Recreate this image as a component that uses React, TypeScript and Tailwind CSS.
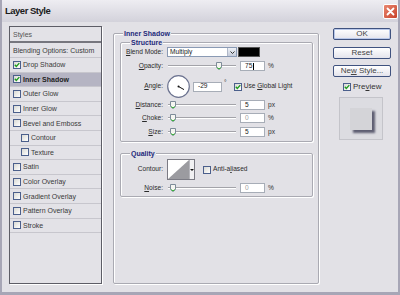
import React from 'react';

type StyleItem = {
    label: string;
    checked?: boolean;
    indent?: boolean;
    active?: boolean;
};

const ITEMS: StyleItem[] = [
    { label: 'Drop Shadow', checked: true },
    { label: 'Inner Shadow', checked: true, active: true },
    { label: 'Outer Glow' },
    { label: 'Inner Glow' },
    { label: 'Bevel and Emboss' },
    { label: 'Contour', indent: true },
    { label: 'Texture', indent: true },
    { label: 'Satin' },
    { label: 'Color Overlay' },
    { label: 'Gradient Overlay' },
    { label: 'Pattern Overlay' },
    { label: 'Stroke' },
];

// underlined mnemonic letter
const U = ({ children }: { children: React.ReactNode }) => (
    <span className="underline decoration-[0.5px] underline-offset-[1px]">{children}</span>
);

const CheckBox = ({ checked }: { checked?: boolean }) => (
    <span className="flex h-[8px] w-[8px] shrink-0 items-center justify-center border border-[#4b5f8c] bg-gradient-to-br from-[#d9d9d4] to-white">
        {checked && (
            <svg viewBox="0 0 6 6" className="h-[6px] w-[6px]">
                <path d="M0.8 2.8 L2.3 4.4 L5.3 1.1" fill="none" stroke="#1e9b1e" strokeWidth="1.4" />
            </svg>
        )}
    </span>
);

const Slider = ({ at }: { at: number }) => (
    <div className="relative ml-[1px] h-[10px] w-[68px]">
        <div className="absolute inset-x-0 top-[4px] h-[2px] border-t border-[#a3a3a9] bg-white" />
        <svg className="absolute top-[1px] h-[8px] w-[6px]" style={{ left: at }} viewBox="0 0 6 8">
            <path d="M0.5 0.5 H5.5 V5.5 L3 7.5 L0.5 5.5 Z" fill="#f5f5f1" stroke="#7d8b99" strokeWidth="1" />
            <path d="M1.2 5.6 L3 7 L4.8 5.6" fill="none" stroke="#2eb02e" strokeWidth="1" />
        </svg>
    </div>
);

const Field = ({
    children,
    dim,
    className = 'ml-[4px] w-[25px]',
}: {
    children: React.ReactNode;
    dim?: boolean;
    className?: string;
}) => (
    <div
        className={`flex h-[10px] items-center border border-[#a7adb7] bg-white pl-[4px] text-[6.6px] leading-none ${className} ${
            dim ? 'text-[#a0a0a0]' : 'text-[#222]'
        }`}
    >
        {children}
    </div>
);

const Group = ({
    title,
    className,
    children,
}: {
    title: string;
    className: string;
    children?: React.ReactNode;
}) => (
    <div
        className={`relative rounded-[2px] border border-[#aaaab2] shadow-[1px_1px_0_#fff,inset_1px_1px_0_#fff] ${className}`}
    >
        <span className="absolute top-[-5px] left-[9px] bg-[#e2e1e6] px-[1px] text-[7px] leading-[9px] font-bold text-[#1d2a7a]">
            {title}
        </span>
        {children}
    </div>
);

const Row = ({
    label,
    className,
    children,
}: {
    label: React.ReactNode;
    className: string;
    children: React.ReactNode;
}) => (
    <div className={`flex items-center ${className}`}>
        <span className="w-[42px] text-right text-[6.6px] leading-none text-[#2a2a2a]">{label}</span>
        <div className="ml-[4px] flex items-center">{children}</div>
    </div>
);

const Unit = ({ children }: { children: React.ReactNode }) => (
    <span className="ml-[3px] text-[6.6px] leading-none text-[#333]">{children}</span>
);

const Button = ({ children, main }: { children: React.ReactNode; main?: boolean }) => (
    <div
        className={`flex h-[12px] w-[58px] items-center justify-center rounded-[2px] border border-[#3f527f] bg-gradient-to-b from-white to-[#e4e4ec] text-[8px] leading-none text-[#444] ${
            main ? 'shadow-[inset_0_0_0_1px_#b9c8ea]' : ''
        }`}
    >
        {children}
    </div>
);

export default function App() {
    return (
        <div className="flex h-[295px] w-[400px] flex-col overflow-hidden border-x-[2px] border-b-[3px] border-[#a7a6b6] bg-[#e2e1e6] font-['Liberation_Sans',Arial,sans-serif]">
            {/* Title bar */}
            <div className="flex h-[22px] shrink-0 items-center justify-between bg-gradient-to-b from-[#eeedf2] to-[#d3d2db] pl-[3px]">
                <span className="text-[9.5px] font-bold tracking-[-0.5px] text-[#1b1b1b]">Layer Style</span>
                <div className="flex h-[15px] w-[15px] items-center justify-center rounded-[2px] border border-white bg-gradient-to-br from-[#e8866f] to-[#c8402a]">
                    <svg viewBox="0 0 9 9" className="h-[9px] w-[9px]">
                        <path d="M1.5 1.5 L7.5 7.5 M7.5 1.5 L1.5 7.5" stroke="#fff" strokeWidth="1.8" strokeLinecap="round" />
                    </svg>
                </div>
            </div>

            <div className="flex flex-1">
                {/* Styles list */}
                <div className="mt-[4px] ml-[7px] h-[258px] w-[93px] border border-[#5d5d66] bg-[#e3e2e7] text-[7px] leading-none text-[#3a3a3a] shadow-[1px_1px_0_#fff]">
                    <div className="flex h-[16px] items-center border-b-[2px] border-[#76767e] pl-[3px] text-[#555]">
                        Styles
                    </div>
                    <div className="flex h-[15px] items-center border-b border-[#c7c6cd] pl-[3px]">
                        Blending Options: Custom
                    </div>
                    {ITEMS.map((item) => (
                        <div
                            key={item.label}
                            className={`flex h-[14.6px] items-center gap-[2px] border-b border-[#c7c6cd] ${
                                item.indent ? 'pl-[11px]' : 'pl-[3px]'
                            } ${item.active ? 'bg-[#b5b4c3] font-bold text-[#222]' : ''}`}
                        >
                            <CheckBox checked={item.checked} />
                            <span>{item.label}</span>
                        </div>
                    ))}
                </div>

                {/* Inner Shadow settings */}
                <Group title="Inner Shadow" className="mt-[11px] ml-[11px] h-[251px] w-[206px] pt-[8px] pl-[6px]">
                    <Group title="Structure" className="h-[100px] w-[193px]">
                        <Row label={<><U>B</U>lend Mode:</>} className="mt-[4px] h-[10px]">
                            <div className="flex h-[10px] w-[70px] items-center border border-[#8a9ab4] bg-white">
                                <span className="flex-1 pl-[2px] text-[6.6px] leading-none text-[#222]">Multiply</span>
                                <span className="flex h-full w-[9px] items-center justify-center border-l border-[#b0b8c8] bg-gradient-to-b from-[#eef1f7] to-[#c6ccda]">
                                    <svg viewBox="0 0 5 3" className="h-[3px] w-[5px]">
                                        <path d="M0.5 0.5 L2.5 2.5 L4.5 0.5" fill="none" stroke="#333" strokeWidth="1" />
                                    </svg>
                                </span>
                            </div>
                            <div className="ml-[1px] h-[10px] w-[22px] border border-[#555] bg-black" />
                        </Row>
                        <Row label={<><U>O</U>pacity:</>} className="mt-[4px] h-[10px]">
                            <Slider at={48} />
                            <Field>
                                75<span className="ml-[0.5px] h-[7px] w-px bg-black" />
                            </Field>
                            <Unit>%</Unit>
                        </Row>
                        <Row label={<><U>A</U>ngle:</>} className="mt-[4px] h-[23px]">
                            <svg width="23" height="23" viewBox="0 0 23 23">
                                <circle cx="11.5" cy="11.5" r="10.8" fill="#fff" stroke="#6c7390" strokeWidth="1.2" />
                                <line x1="11.5" y1="11.5" x2="17" y2="14.6" stroke="#111" strokeWidth="1" />
                                <circle cx="11.5" cy="11.5" r="1" fill="#111" />
                            </svg>
                            <Field className="ml-[3px] w-[29px]">-29</Field>
                            <span className="ml-[2px] self-start pt-[5px] text-[6.6px] leading-none text-[#333]">°</span>
                            <span className="ml-[7px]">
                                <CheckBox checked />
                            </span>
                            <span className="ml-[2px] text-[6.6px] leading-none text-[#2a2a2a]">
                                Use <U>G</U>lobal Light
                            </span>
                        </Row>
                        <Row label={<><U>D</U>istance:</>} className="mt-[2px] h-[10px]">
                            <Slider at={2} />
                            <Field>5</Field>
                            <Unit>px</Unit>
                        </Row>
                        <Row label={<><U>C</U>hoke:</>} className="mt-[3px] h-[10px]">
                            <Slider at={2} />
                            <Field dim>0</Field>
                            <Unit>%</Unit>
                        </Row>
                        <Row label={<><U>S</U>ize:</>} className="mt-[4px] h-[10px]">
                            <Slider at={2} />
                            <Field>5</Field>
                            <Unit>px</Unit>
                        </Row>
                    </Group>

                    <Group title="Quality" className="mt-[11px] h-[44px] w-[193px]">
                        <Row label="Contour:" className="mt-[5px] h-[21px]">
                            <div className="flex h-[21px] w-[28px] border border-[#7b7b84] bg-white">
                                <svg viewBox="0 0 22 19" className="h-[19px] w-[21px]" preserveAspectRatio="none">
                                    <polygon points="0,19 22,0 22,19" fill="#9b9ba0" />
                                </svg>
                                <span className="flex flex-1 items-center justify-center border-l border-[#b5b5bb] bg-[#f1f1f3]">
                                    <svg viewBox="0 0 4 2" className="h-[2px] w-[4px]">
                                        <polygon points="0,0 4,0 2,2" fill="#111" />
                                    </svg>
                                </span>
                            </div>
                            <span className="ml-[8px]">
                                <CheckBox />
                            </span>
                            <span className="ml-[2px] text-[6.6px] leading-none text-[#2a2a2a]">
                                Anti-a<U>l</U>iased
                            </span>
                        </Row>
                        <Row label={<><U>N</U>oise:</>} className="mt-[3px] h-[10px]">
                            <Slider at={2} />
                            <Field dim>0</Field>
                            <Unit>%</Unit>
                        </Row>
                    </Group>
                </Group>

                {/* Buttons */}
                <div className="mt-[6px] ml-[14px] flex w-[58px] flex-col">
                    <Button main>OK</Button>
                    <div className="mt-[7px]">
                        <Button>Reset</Button>
                    </div>
                    <div className="mt-[6px]">
                        <Button>
                            Ne<U>w</U>&nbsp;Style...
                        </Button>
                    </div>
                    <div className="mt-[6px] ml-[10px] flex items-center gap-[2px] text-[8px] leading-none text-[#333]">
                        <CheckBox checked />
                        <span>
                            Pre<U>v</U>iew
                        </span>
                    </div>
                    <div className="mt-[6px] ml-[6px] flex h-[43px] w-[44px] items-center justify-center border border-[#c4c4ca] bg-[#dcdce1]">
                        <div className="h-[22px] w-[22px] bg-[#d4d4d8] shadow-[3px_3px_2px_#5e5e72]" />
                    </div>
                </div>
            </div>
        </div>
    );
}
